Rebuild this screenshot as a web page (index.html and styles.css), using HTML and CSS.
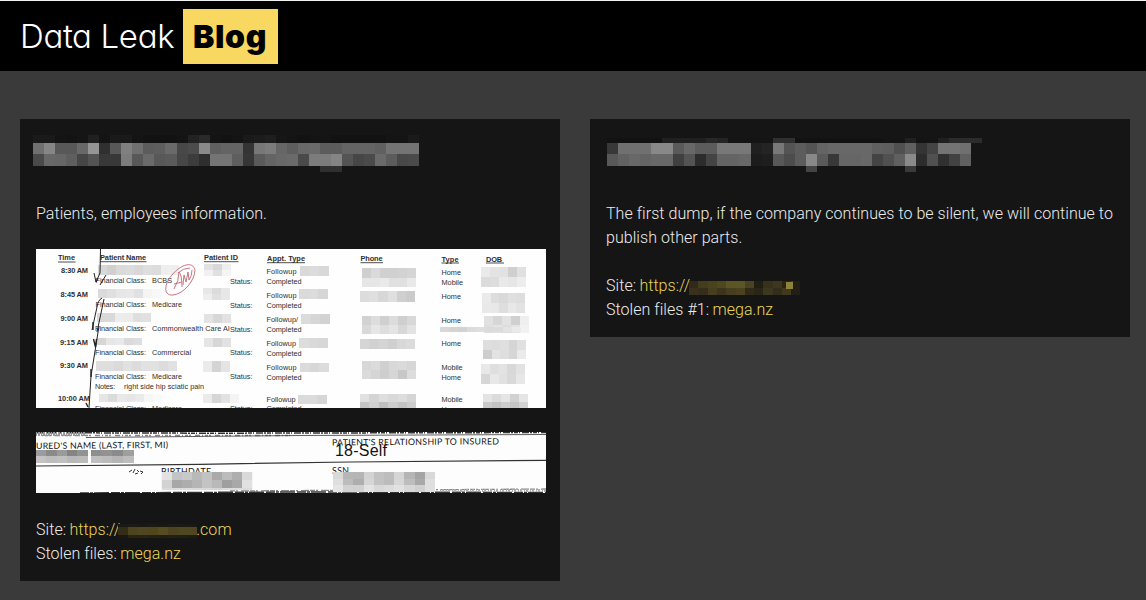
FILE: index.html
```
<!DOCTYPE html>
<html lang="en">
<head>
<meta charset="utf-8">
<title>Data Leak Blog</title>
<link rel="stylesheet" href="styles.css">
</head>
<body>
<header class="header">
  <a class="logo"><span class="logo-text">Data Leak</span><strong class="logo-badge">Blog</strong></a>
</header>
<main class="posts">
  <article class="card">
    <h2 class="title"><svg class="title-mask" viewBox="20 119 540 64">
      <g data-m="33 135 11.04 8 1a1a14131520141a1a1412121214222a1412141a1c1e1614121414121212121214141a"></g>
      <g data-m="33 143 11.04 11.3 708658586895305880705c5e6a484c8a60646434777c665e686a5c5c64646460747474/4a68665e465438387c586a585a463c2e74745e365a64686a4a7c7c8454464a6a5c484a"></g>
      <g data-m="320 165.6 11 6 3030"></g>
    </svg></h2>
    <p class="text">Patients, employees information.</p>
    <svg class="scan" width="510" height="159" viewBox="36 249 510 159">
      <rect x="36" y="249" width="510" height="159" fill="#fefefe"/>
      <g class="mosaics">
        <g data-m="98 265 9 9.5 d8d0dadcd8dedceeee"></g>
        <g data-m="98 288.5 9 9.5 dadfe6e8e1f4f8"></g>
        <g data-m="97 312.5 9 9.5 d9d9ecebdfe1"></g>
        <g data-m="97 337.5 9 7.5 d6e6e9dade"></g>
        <g data-m="96 361 9 10 dededae1dce1e1dce1"></g>
        <g data-m="99 394 9 7.5 e5dbe9e6eaf6fa"></g>
        <g data-m="204 264 9 6 e2d8ee/f1e1f5"></g>
        <g data-m="203 288 9 6 e7dbe7/eee0e7"></g>
        <g data-m="204 314 9 9 e3d7e2"></g>
        <g data-m="204 337.5 9 9 e5d7e2"></g>
        <g data-m="203 361 9 10.5 ebd4e4"></g>
        <g data-m="203 394 9 9 ebd6e2f4"></g>
        <g data-m="300 266 9.6 9.5 d9dcd8"></g>
        <g data-m="299 289 9.6 10 dadcd6"></g>
        <g data-m="301 314 9.6 10 dbd6d2"></g>
        <g data-m="299 338 9.6 10 ddd9d7"></g>
        <g data-m="300 362.5 9.6 9.5 dbd7dc"></g>
        <g data-m="298 395 9.6 9 dbdbd6"></g>
        <g data-m="362 268 9 9.7 cfdad0d0d2d5/e6e6eae0e0e9"></g>
        <g data-m="360 291 9.2 10.5 dcdfd7dfcfcb"></g>
        <g data-m="362 316 9 9 d2ddcfdccfd8/d9e6dee4d7e3"></g>
        <g data-m="360 339 9.2 9.5 d5d1d4cfd8dc"></g>
        <g data-m="362 361 9 9 d7dbd0d8dad6/dbd5ced6c8dc"></g>
        <g data-m="360 394 9.4 7.5 e1d4ded9ddd5/c5d0bfcdc3cd"></g>
        <g data-m="481 267 9 10 eae3e2cfe0/dbdde9e6ed"></g>
        <g data-m="482 293 8.6 10 eaddd9dfdd/e9e8dee8e2"></g>
        <g data-m="484 316 9 8.5 e1d6e2d0ef/dee4dde4f2"></g>
        <g data-m="440 326.5 9 5.5 d8d4d2dbdedbdbe3ea"></g>
        <g data-m="483 340 8.6 9.5 dedcdfd5e0/cde3ded6ea"></g>
        <g data-m="481 364 8.8 10 e8dfe3d8e2/d6e8e1d9e7"></g>
        <g data-m="483 394 9 7.5 e4dbe5d1e5/c9c2cdc6d2"></g>
      </g>
      <g class="scan-head">
        <text x="58" y="260" textLength="17">Time</text><text x="100" y="260" textLength="46">Patient Name</text><text x="204" y="260" textLength="34">Patient ID</text><text x="267" y="261" textLength="38">Appt. Type</text><text x="360.500" y="261" textLength="22">Phone</text><text x="441.500" y="261.500" textLength="17">Type</text><text x="486" y="261.500" textLength="16">DOB</text>
      </g>
      <path d="M58 262h17.500M100 261.700h46.500M204 261.700h34.500M267 262.700h38M360.500 262.700h22.500M441.500 263h17.500M486 263h18" stroke="#222" stroke-width=".8"/>
      <g class="scan-time">
        <text x="61" y="273" textLength="27">8:30 AM</text><text x="60.500" y="297" textLength="27.500">8:45 AM</text><text x="60.500" y="321" textLength="27.500">9:00 AM</text><text x="60" y="344.500" textLength="28">9:15 AM</text><text x="60" y="368" textLength="28">9:30 AM</text><text x="58" y="401" textLength="32">10:00 AM</text>
      </g>
      <g class="scan-cell">
        <text x="95.500" y="283" textLength="50.500">Financial Class:</text><text x="152" y="283" textLength="20">BCBS</text><text x="230" y="283.500" textLength="22.500">Status:</text>
        <text x="95.500" y="307" textLength="50.500">Financial Class:</text><text x="152" y="307" textLength="30">Medicare</text><text x="230" y="307.500" textLength="22.500">Status:</text>
        <text x="95" y="331" textLength="51">Financial Class:</text><text x="152" y="331" textLength="77.500">Commonwealth Care Al</text><text x="230" y="331.500" textLength="22.500">Status:</text>
        <text x="95" y="355" textLength="51">Financial Class:</text><text x="152" y="355" textLength="39">Commercial</text><text x="230" y="355" textLength="22.500">Status:</text>
        <text x="95" y="379" textLength="51">Financial Class:</text><text x="152" y="379" textLength="30">Medicare</text><text x="230" y="379" textLength="22.500">Status:</text>
        <text x="95" y="388.700" textLength="20">Notes:</text><text x="124" y="388.700" textLength="80">right side hip sciatic pain</text>
        <text x="95" y="410.500" textLength="51">Financial Class:</text><text x="152" y="410.500" textLength="30">Medicare</text><text x="230" y="410.500" textLength="22.500">Status:</text>
        <text x="266.500" y="274" textLength="30">Followup</text><text x="266.500" y="284" textLength="35">Completed</text>
        <text x="266.500" y="298" textLength="30">Followup</text><text x="266.500" y="308" textLength="35">Completed</text>
        <text x="266.500" y="322" textLength="31.500">Followup/</text><text x="266.500" y="331.700" textLength="35">Completed</text>
        <text x="266.500" y="345.700" textLength="29.500">Followup</text><text x="266.500" y="355.700" textLength="35">Completed</text>
        <text x="266.500" y="369.500" textLength="30">Followup</text><text x="266.500" y="379.500" textLength="35">Completed</text>
        <text x="266.500" y="401.700" textLength="29">Followup</text><text x="266.500" y="411" textLength="35">Completed</text>
        <text x="441.500" y="274.500" textLength="19.500">Home</text><text x="441.500" y="284.700" textLength="21.500">Mobile</text>
        <text x="441.500" y="298.500" textLength="19.500">Home</text><text x="441.500" y="322.500" textLength="19.500">Home</text><text x="441.500" y="346" textLength="19.500">Home</text>
        <text x="441.500" y="370" textLength="21">Mobile</text><text x="441.500" y="380" textLength="19.500">Home</text><text x="441.500" y="402" textLength="21">Mobile</text><text x="441.500" y="412" textLength="19.500">Home</text>
      </g>
      <g fill="none" stroke="#222" stroke-width="1">
        <path d="M100.500 249L100 273L96 282M106 275l-6 10M94 273l2 9 2-3M102 298q-4 2-5 9l-5 23M104 299L97 332M99 326L96 345L91 376L89 408"/>
        <path d="M93 322v8M93.500 339l2 8 1-8M91 369v8M86 403l2 4" stroke-width="1.400"/>
      </g>
      <g fill="none" stroke="#bf6674" stroke-width=".9">
        <path d="M172 275C164 284 163 296 173 295C184 294 195 280 195 270C193 261 181 264 172 275Z"/>
        <path d="M174 289q5-8 5-17q3 3 3 15M174 284l8-2M183 285l1-10 2 7 2-10 1 8q3-4 3-10M178 273q5-5 12-5"/>
      </g>
    </svg>
    <svg class="scan" width="510" height="61" viewBox="36 432 510 61">
      <rect x="36" y="432" width="510" height="61" fill="#fdfdfd"/>
      <g fill="none" stroke="#333">
        <path d="M36 432.700L210 433.200L546 432.500" stroke-width="1.500" stroke-dasharray="2 1 4 1 1 2 7 1"/>
        <path d="M42 435.500H290" stroke="#888" stroke-width="1.300" stroke-dasharray="1 2 3 1 2 4 5 2"/>
        <path d="M36 434H86" stroke="#999" stroke-width="4" stroke-dasharray="1 1 2 1"/>
        <path d="M86 437.500L300 435.500L546 434.500" stroke-width=".8"/>
        <path d="M36 466L200 464.300L350 462L546 460.300" stroke-width="1.200"/>
        <path d="M230 491L546 489" stroke="#888" stroke-width="1.300" stroke-dasharray="5 1 2 3 8 1"/>
        <path d="M80 493L300 492L546 492.500" stroke-width="1.500" stroke-dasharray="9 1 3 1 15 2"/>
        <path d="M440 490.500H546" stroke="#aaa" stroke-width="3" stroke-dasharray="1 1 2 2"/>
        <path d="M129 472l3-2m1 3l2-4m0 5l3-1m-1-3l2 2m1-1l3 1-2 2" stroke-width="1"/>
      </g>
      <g class="scan-form">
        <text x="36" y="449" textLength="132" transform="rotate(-.5 36 449)">URED'S NAME (LAST, FIRST, MI)</text>
        <text x="332" y="445.500" textLength="167" transform="rotate(-.4 332 445)">PATIENT'S RELATIONSHIP TO INSURED</text>
        <text x="161" y="475" textLength="50">BIRTHDATE</text><text x="332" y="474" textLength="17">SSN</text>
      </g>
      <text class="scan-self" x="335" y="456" textLength="52">18-Self</text>
      <rect x="161" y="472" width="92" height="17" fill="#f4f4f4"/>
      <g class="mosaics">
        <g data-m="36 449.500 10.3 6.5 9c8a9b8492/c3bdc0b8bb"></g><g data-m="91 449.500 10.7 6.500 8e928b9f/bfbbb5bd"></g>
        <g data-m="162 472 10 8.300 e2c4c8b9c2aabcaed9/d2a7adb5c3b99fa8e1"></g><g data-m="162 488 10 2 dadcdcdad8d5dcdddb"></g>
        <g data-m="333 472 10.200 6.500 d9b6b5d3c2bdd5b5a4d8/dfbcaed6c2bcd7bda9df/e5d2d1e3d8dce1d7d0df"></g>
      </g>
    </svg>
    <p class="text">Site: <a class="link">https://<svg class="url-mask url-mask-short" width="79" height="14" viewBox="0 0 79 14">
      <g data-c="0 0 10 3 1a1914 1c1a14 191813 1b1a14 191813 1c1a14 1b1913 191813"></g>
      <g data-c="0 3 10 8 332c17 4d431f 4f4623 50461e 574b22 4d4320 4f4622 504622"></g>
      <g data-c="0 11 10 3 191813 282313 282414 242013 211e13 25200f 211f13 1e1b13"></g>
    </svg>.com</a><br>Stolen files: <a class="link">mega.nz</a></p>
  </article>
  <article class="card">
    <h2 class="title"><svg class="title-mask" viewBox="590 119 540 64">
      <g data-m="607 138 11.04 5 121212121220202020282414141414303012121212121212121414201414202c2c2c"></g>
      <g data-m="607 143 11.04 11.3 3870707088885a685c5c787878202478545c546468686868605e50603444747470/58626864686840542c446464681c1e584c5c885a386666684450608a2c50304260"></g>
      <g data-m="806 165.600 11 6 44"></g><g data-m="905 165.600 11 6 3a"></g>
    </svg></h2>
    <p class="text">The first dump, if the company continues to be silent, we will continue to publish other parts.</p>
    <p class="text">Site: <a class="link">https://<svg class="url-mask" width="111" height="14" viewBox="0 0 111 14">
      <g data-c="0 0 9.3 7 2f2b18 433c1d 48421d 4d4820 5c5422 5c5526 4a4322 211f14 363118 3c3820 292515 46401f"></g>
      <g data-c="0 7 9.3 7 39311b 342e1a 453f20 3c351c 463e20 4b4220 312a19 292617 3c371e 342d1b 403920 211f16"></g>
      <g data-c="97 1 7 7 8d8238"></g><g data-c="104 0 7 14 211f16"></g>
    </svg></a><br>Stolen files #1: <a class="link">mega.nz</a></p>
  </article>
</main>
<script src="mosaic.js"></script>
</body>
</html>
```
FILE: styles.css
```
* { box-sizing: border-box; }
body {
  margin: 0;
  min-height: 600px;
  background: #3a3a3a;
  color: #ececec;
  font: 300 16px/24px Roboto, sans-serif;
  letter-spacing: .05px;
}
.header {
  display: flex;
  align-items: flex-start;
  height: 71px;
  padding: 8px 20px;
  border-top: 1px solid #f2f2f2;
  background: #000;
}
.logo {
  display: flex;
  align-items: center;
  height: 55px;
  color: #fff;
  font-family: Inter, sans-serif;
  font-size: 33px;
  line-height: 55px;
  white-space: nowrap;
}
.logo-text {
  width: 163px;
  font-weight: 300;
  font-feature-settings: "cv11";
  letter-spacing: -.35px;
}
.logo-badge {
  width: 95px;
  height: 55px;
  padding-left: 10px;
  background: #f8d860;
  color: #000;
  font-weight: 900;
  font-size: 32px;
  letter-spacing: .6px;
}
.posts {
  display: grid;
  grid-template-columns: 540px 540px;
  align-items: start;
  gap: 30px;
  padding: 48px 20px 19px;
}
.card {
  padding: 0 16px 15px;
  background: #151515;
}
.title {
  height: 83px;
  margin: 0 -16px;
}
.title-mask { display: block; width: 540px; height: 64px; }
.text { margin: 0 0 24px; }
.text:last-child { margin-bottom: 0; }
.link { color: #ead65c; margin-left: -.7px; }
.scan { display: block; margin-bottom: 24px; }
.text + .scan { margin-top: -1px; }
.scan + .text { margin-top: 25px; }
.scan + .scan { margin-bottom: 0; }
.scan text { fill: #303030; font-family: "Liberation Sans", sans-serif; font-weight: 400; letter-spacing: 0; }
.scan-head text, .scan-time text { font-size: 7.4px; font-weight: 700; }
.scan-cell text { font-size: 7.3px; }
.scan .scan-form text { fill: #111; font-family: Lato, sans-serif; font-size: 8.8px; }
.scan .scan-self { fill: #111; font-size: 16px; }
.url-mask { display: inline-block; margin-left: -1px; vertical-align: -4px; }
.url-mask-short { margin: 0 -1px 0 -2px; vertical-align: -3px; }
```
FILE: mosaic.js
```
const NS = "http://www.w3.org/2000/svg";

function cell(group, x, y, w, h, color) {
  const rect = document.createElementNS(NS, "rect");
  rect.setAttribute("x", x);
  rect.setAttribute("y", y);
  rect.setAttribute("width", w);
  rect.setAttribute("height", h);
  rect.setAttribute("fill", color);
  rect.setAttribute("shape-rendering", "crispEdges");
  group.appendChild(rect);
}

// Grey mosaics: x y cellWidth cellHeight rows, two hex digits per cell
document.querySelectorAll("[data-m]").forEach(group => {
  const [x, y, w, h, rows] = group.dataset.m.split(" ");
  rows.split("/").forEach((row, r) => {
    row.match(/../g).forEach((v, c) => cell(group, +x + c * w, +y + r * h, +w, +h, "#" + v + v + v));
  });
});

// Coloured mosaics: one row, six hex digits per cell
document.querySelectorAll("[data-c]").forEach(group => {
  const [x, y, w, h, ...colors] = group.dataset.c.split(" ");
  colors.forEach((v, c) => cell(group, +x + c * w, +y, +w, +h, "#" + v));
});
```
